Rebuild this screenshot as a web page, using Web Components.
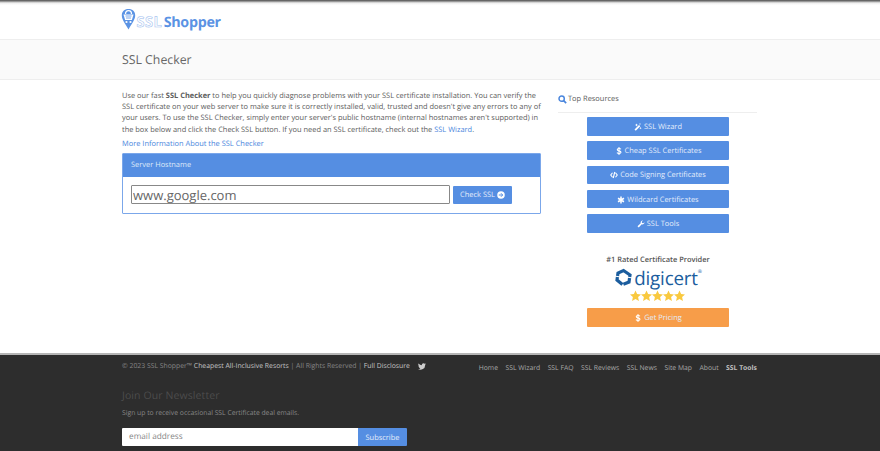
<!DOCTYPE html>
<html><head><meta charset="utf-8"><style>
html,body{margin:0;padding:0;height:451px;overflow:hidden;background:#fff;font-family:"Open Sans",sans-serif}
</style></head><body>
<ssl-page></ssl-page>
<template id="t-page"><style>
:host{display:block;width:880px;height:451px;overflow:hidden;font:7.45px/11.4px "Open Sans",sans-serif;color:#5c5c5c;text-rendering:geometricPrecision}
.wrap{width:636px;margin:0 auto 0 122px}
.top{height:39px;border-bottom:1px solid #eee;background:linear-gradient(#555 0,#777 1px,#bbb 2px,#eee 3px,#fff 5px)}
.band{height:39px;background:#fafafa;border-bottom:1px solid #eee}
.band h1{margin:0;font:400 12.300px/39px "Open Sans",sans-serif;color:#666}
.main{height:273px;display:flex;gap:18px}
.left{width:419px;padding-top:10.500px}
.right{width:198px;padding-top:11px}
</style>
<div class="top"><div class="wrap"><ssl-logo></ssl-logo></div></div>
<div class="band"><div class="wrap"><h1>SSL Checker</h1></div></div>
<div class="wrap main"><div class="left"><intro-text></intro-text><check-panel></check-panel></div>
<div class="right"><side-bar></side-bar></div></div>
<site-footer></site-footer>
</template>

<template id="t-logo"><style>
:host{display:flex;align-items:flex-start;height:39px;padding-top:8px;box-sizing:border-box;margin-left:-1px}
svg{display:block}
.s{font:700 14.300px/17px "Open Sans",sans-serif;color:#5b93e4;margin:6px 0 0 0;letter-spacing:-.3px}
.l{font:700 14.500px/17px "Open Sans",sans-serif;color:#fff;-webkit-text-stroke:.6px #a9c5ef;margin:6px 1.500px 0 .5px;letter-spacing:.5px}
</style>
<svg width="15" height="23" viewBox="0 0 15 23"><path d="M7.5 1C3.300 1 .8 3.600.8 7.500c0 3.800 3.300 8 6.700 14 3.400-6 6.700-10.200 6.700-14C14.200 3.600 11.700 1 7.500 1z" fill="#5b93e4"/><path d="M4.500 6C4.500 3.800 5.800 2.700 7.500 2.700s3 1.100 3 3.300" fill="none" stroke="#fff" stroke-width="1.300"/><path d="M2.500 6.500h10l-1.600 5.500H4.100z" fill="#fff"/><path d="M4.500 8h6M5 10h5" stroke="#5b93e4" stroke-width=".8"/><circle cx="5.500" cy="14" r="1.100" fill="#fff"/><circle cx="9.500" cy="14" r="1.100" fill="#fff"/></svg>
<span class="l">SSL</span><span class="s">Shopper</span>
</template>

<template id="t-intro"><style>
:host{display:block}
p{margin:0 0 3px}
a{color:#4a86dd;text-decoration:none}
b{font-weight:700}
.m{display:block;margin-bottom:2px}
</style>
<p>Use our fast <b>SSL Checker</b> to help you quickly diagnose problems with your SSL certificate installation. You can verify the SSL certificate on your web server to make sure it is correctly installed, valid, trusted and doesn't give any errors to any of your users. To use the SSL Checker, simply enter your server's public hostname (internal hostnames aren't supported) in the box below and click the Check SSL button. If you need an SSL certificate, check out the <a>SSL Wizard</a>.</p>
<a class="m">More Information About the SSL Checker</a>
</template>

<template id="t-panel"><style>
:host{display:block;border:1px solid #7ba7ea;border-radius:1px}
.h{height:23px;background:#558ee2;color:#dfe9f9;line-height:23px;padding-left:8px}
.b{height:36px;display:flex;align-items:center;padding:0 8px;gap:3px}
input{box-sizing:border-box;width:319px;height:19px;border:1px solid #888;border-radius:1px;padding:0 0 0 1px;font:13px "Open Sans",sans-serif;color:#666;background:#fff;text-rendering:geometricPrecision}
</style>
<div class="h">Server Hostname</div>
<div class="b"><input value="www.google.com"><blue-btn style="width:59px;height:18px" icon="plus">Check SSL </blue-btn></div>
</template>

<template id="t-btn"><style>
:host{display:flex;align-items:center;justify-content:center;gap:2px;background:var(--bg,#558ee2);color:#e4edfb;border-radius:1px;font:7.45px "Open Sans",sans-serif;box-sizing:border-box;white-space:nowrap;padding-top:1px}
svg{display:block;fill:#fff;flex:none}
:host([icon=plus]){flex-direction:row-reverse}
</style><svg id="i" width="8" height="8" viewBox="0 0 16 16"></svg><span><slot></slot></span>
</template>

<template id="t-side"><style>
:host{display:block}
.t{border-bottom:1px solid #eee;display:flex;gap:1px;align-items:flex-start;padding-top:3px;box-sizing:border-box;height:22px;margin-left:-1px}
.t svg{margin-top:1px}
.list{display:flex;flex-direction:column;gap:5.800px;align-items:center;margin-top:4px}
blue-btn{width:142px;height:18.500px}
.pr{margin-top:22px;text-align:center;font-weight:600;font-size:7.450px;line-height:11px;color:#555}
.dg{display:flex;justify-content:center;align-items:center;height:22px;margin-top:1px;font:400 18.800px/22px "Open Sans",sans-serif;color:#1b5d9e;letter-spacing:-.2px}
.dg svg{margin-right:1px}
.dg sup{font-size:5px;line-height:5px;align-self:flex-start;margin-top:3px}
.st{display:flex;justify-content:center;height:13px;margin-top:1px}
.o{margin:5px auto 0;--bg:#f79d49;height:19px}
</style>
<div class="t"><svg width="9" height="9" viewBox="0 0 16 16"><circle cx="6.500" cy="6.500" r="4.700" fill="none" stroke="#4a86dd" stroke-width="2.600"/><path d="M10 10l4.500 4.500" stroke="#4a86dd" stroke-width="3"/></svg><span>Top Resources</span></div>
<div class="list">
<blue-btn icon="wand">SSL Wizard</blue-btn>
<blue-btn icon="dollar">Cheap SSL Certificates</blue-btn>
<blue-btn icon="code">Code Signing Certificates</blue-btn>
<blue-btn icon="star">Wildcard Certificates</blue-btn>
<blue-btn icon="wrench">SSL Tools</blue-btn>
</div>
<div class="pr">#1 Rated Certificate Provider</div>
<div class="dg"><svg width="19" height="19" viewBox="0 0 19 19"><path d="M9.500 2.500 16 7 15 14 8.500 16.500 3 12 4 5z" fill="none" stroke="#1b5d9e" stroke-width="3.200" stroke-dasharray="10 1"/></svg><span>digicert</span><sup>®</sup></div>
<div class="st"><svg width="56" height="12" viewBox="0 0 56 12" fill="#f9c93f"><path id="s" d="M5.500 .5l1.600 3.600 3.900.4-2.900 2.600.8 3.900-3.400-2-3.400 2 .8-3.900L0 4.500l3.900-.4z"/><use href="#s" x="11"/><use href="#s" x="22"/><use href="#s" x="33"/><use href="#s" x="44"/></svg></div>
<blue-btn class="o" icon="dollar">Get Pricing</blue-btn>
</template>

<template id="t-footer"><style>
:host{display:block;height:98px;background:#2d2d2d;border-top:2px solid #b5b5b5;box-sizing:border-box;color:#868686;white-space:nowrap}
.wrap{width:635px;margin-left:122px}
.row{display:flex;justify-content:space-between;align-items:center;height:24px}
.l{display:flex;align-items:center;gap:8px;font-size:6.850px}
.l b{font-weight:400;color:#c4c4c4}
.l svg{margin-top:-1px}
nav{display:flex;gap:7.500px;font-size:6.800px;color:#a8a8a8;margin-top:2px}
nav b{color:#bdbdbd}
h4{margin:9px 0 0;font:400 10.500px/16px "Open Sans",sans-serif;color:#4c4c4c;letter-spacing:.1px}
p{margin:3px 0 0;font-size:6.800px;line-height:11px;color:#878787}
form{display:flex;margin-top:10px;width:285px}
.in{width:236px;height:18px;background:#fff;color:#888;font-size:8.250px;line-height:18px;padding-left:7px;box-sizing:border-box;border-radius:1px 0 0 1px}
.su{width:49px;height:18px;--bg:#558ee2}
</style>
<div class="wrap">
<div class="row"><div class="l"><span>© 2023 SSL Shopper™ <b>Cheapest All-Inclusive Resorts</b> | All Rights Reserved | <b>Full Disclosure</b></span><svg width="8" height="7" viewBox="0 0 16 13" fill="#ccc"><path d="M16 1.500a6.500 6.500 0 0 1-1.900.5A3.300 3.300 0 0 0 15.500.2a6.600 6.600 0 0 1-2.100.8 3.300 3.300 0 0 0-5.600 3A9.300 9.300 0 0 1 1.100.600a3.300 3.300 0 0 0 1 4.400 3.300 3.300 0 0 1-1.500-.4c0 1.600 1.100 3 2.600 3.300a3.300 3.300 0 0 1-1.500.1 3.300 3.300 0 0 0 3.100 2.300A6.600 6.600 0 0 1 0 11.500a9.300 9.300 0 0 0 14.300-8.300A6.600 6.600 0 0 0 16 1.500z"/></svg></div>
<nav><span>Home</span><span>SSL Wizard</span><span>SSL FAQ</span><span>SSL Reviews</span><span>SSL News</span><span>Site Map</span><span>About</span><b>SSL Tools</b></nav></div>
<h4>Join Our Newsletter</h4>
<p>Sign up to receive occasional SSL Certificate deal emails.</p>
<form><div class="in">email address</div><blue-btn class="su" style="border-radius:0 1px 1px 0">Subscribe</blue-btn></form>
</div>
</template>

<script>
const ICONS={
plus:'<circle cx="8" cy="8" r="7.500"/><path d="M3.500 8h7M8 4.500 11.500 8 8 11.500" stroke="#558ee2" stroke-width="2" fill="none"/>',
dollar:'<path d="M12 4.500C11 3.300 9.500 3 8 3 6 3 4.500 3.800 4.500 5.300 4.500 8.300 12 7.200 12 10.700 12 12.300 10 13 8 13 6.300 13 5 12.500 3.800 11.300" fill="none" stroke="#fff" stroke-width="2.200"/><path d="M7 0h2v16H7z"/>',
code:'<path d="M5 3.500 1.500 8 5 12.500M11 3.500 14.500 8 11 12.500M9.500 2 6.500 14" fill="none" stroke="#fff" stroke-width="2.200"/>',
star:'<path d="M8 1v14M2 4.500l12 7M14 4.500l-12 7" stroke="#fff" stroke-width="3"/>',
wrench:'<path d="M15 4.500a4.300 4.300 0 0 1-5.600 4.100L3.500 15 1 12.500l6.400-5.900A4.300 4.300 0 0 1 12 1l-2.500 2.500.5 2.500 2.500.5z"/>',
wand:'<path d="M1 13 10 4l2.500 2.500-9 9z"/><path d="M5 1l1 2 2 1-2 1-1 2-1-2-2-1 2-1zM13 8l.8 1.500 1.500.8-1.500.8-.8 1.500-.8-1.500-1.500-.8 1.500-.8zM12 0l.7 1.300L14 2l-1.300.7L12 4l-.7-1.300L10 2l1.300-.7z"/>'};
function def(name,id,init){customElements.define(name,class extends HTMLElement{
 constructor(){super();const r=this.attachShadow({mode:'open'});r.appendChild(document.getElementById(id).content.cloneNode(true));}
 connectedCallback(){if(init)init(this)}
});}
def('ssl-logo','t-logo');def('intro-text','t-intro');def('check-panel','t-panel');def('side-bar','t-side');def('site-footer','t-footer');
def('blue-btn','t-btn',el=>{const i=el.shadowRoot.getElementById('i');const k=el.getAttribute('icon');if(k)i.innerHTML=ICONS[k];else i.remove();});
def('ssl-page','t-page');
</script>
</body></html>
